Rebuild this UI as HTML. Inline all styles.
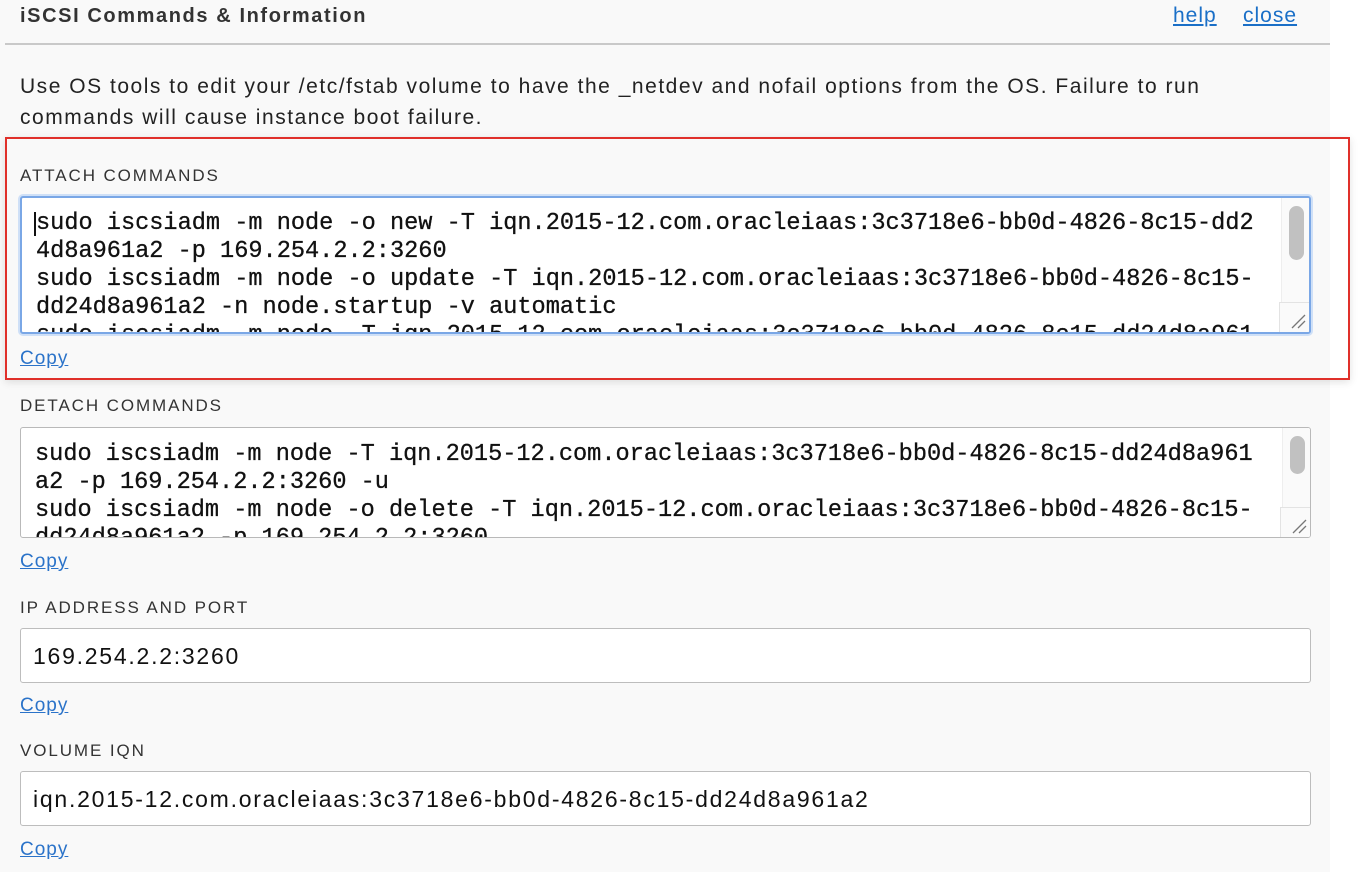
<!DOCTYPE html>
<html><head><meta charset="utf-8"><style>
*{margin:0;padding:0;box-sizing:border-box}
body{width:1362px;height:872px;background:#fff;position:relative;overflow:hidden;font-family:"Liberation Sans",sans-serif;color:#1f1f1f}
.panel{position:absolute;left:0;top:0;width:1330px;height:872px;background:#f9f9f9}
.a{position:absolute;white-space:nowrap}
.title{left:20px;top:5px;font-size:20px;font-weight:bold;color:#333;letter-spacing:1.6px}
.hr{position:absolute;left:5px;top:43px;width:1325px;height:2px;background:#c9c9c9}
.links{top:4px;font-size:21px;color:#1a6fc7;text-decoration:underline;letter-spacing:1px}
.p{left:20px;top:71px;font-size:21px;line-height:31px;color:#222;letter-spacing:1.52px}
.lbl{left:20px;font-size:17px;color:#333;letter-spacing:1.9px}
.copy{left:20px;font-size:19px;color:#2b73c9;text-decoration:underline;letter-spacing:1px}
.ta{position:absolute;left:20px;width:1291px;background:#fff;border:1px solid #b9b9b9;border-radius:3px;overflow:hidden}
.ta pre{position:absolute;left:14px;font-family:"Liberation Mono",monospace;font-size:23.6px;line-height:28px;color:#111;-webkit-text-stroke:.3px #111}
.sb{position:absolute;right:0;top:0;width:28px;bottom:0;background:#fafafa;border-left:1px solid #eee}
.thumb{position:absolute;left:7px;top:8px;width:15px;height:54px;border-radius:8px;background:#c1c1c1}
.grip{position:absolute;right:0;bottom:0;width:30px;height:30px;background:#fafafa;border-left:1px solid #e3e3e3;border-top:1px solid #e3e3e3}
.inp{position:absolute;left:20px;width:1291px;height:55px;background:#fff;border:1px solid #bdbdbd;border-radius:3px;font-size:23px;letter-spacing:1.75px;padding:14px 0 0 12px;color:#111}
.red{position:absolute;left:5px;top:137px;width:1345px;height:243px;border:2px solid #e0302a;box-shadow:0 2px 8px rgba(0,0,0,.12)}
</style></head><body>
<div class="panel"></div>
<div class="a title">iSCSI Commands &amp; Information</div>
<div class="a links" style="left:1173px">help</div>
<div class="a links" style="left:1243px">close</div>
<div class="hr"></div>
<div class="a p">Use OS tools to edit your /etc/fstab volume to have the _netdev and nofail options from the OS. Failure to run<br>commands will cause instance boot failure.</div>
<div class="red"></div>
<div class="a lbl" style="top:166px">ATTACH COMMANDS</div>
<div class="ta" style="top:196px;height:138px;border:2px solid #7aa7e6;box-shadow:0 0 0 2px #cfe0f7">
<pre style="top:12px">sudo iscsiadm -m node -o new -T iqn.2015-12.com.oracleiaas:3c3718e6-bb0d-4826-8c15-dd2
4d8a961a2 -p 169.254.2.2:3260
sudo iscsiadm -m node -o update -T iqn.2015-12.com.oracleiaas:3c3718e6-bb0d-4826-8c15-
dd24d8a961a2 -n node.startup -v automatic
sudo iscsiadm -m node -T iqn.2015-12.com.oracleiaas:3c3718e6-bb0d-4826-8c15-dd24d8a961</pre>
<div style="position:absolute;left:12px;top:14px;width:2px;height:24px;background:#111"></div>
<div class="sb"><div class="thumb"></div></div>
<div class="grip"><svg width="30" height="30"><path d="M12 25L25 12M18 25L25 18" stroke="#777" stroke-width="1.3"/></svg></div>
</div>
<div class="a copy" style="top:348px">Copy</div>
<div class="a lbl" style="top:396px">DETACH COMMANDS</div>
<div class="ta" style="top:427px;height:111px">
<pre style="top:13px">sudo iscsiadm -m node -T iqn.2015-12.com.oracleiaas:3c3718e6-bb0d-4826-8c15-dd24d8a961
a2 -p 169.254.2.2:3260 -u
sudo iscsiadm -m node -o delete -T iqn.2015-12.com.oracleiaas:3c3718e6-bb0d-4826-8c15-
dd24d8a961a2 -p 169.254.2.2:3260</pre>
<div class="sb"><div class="thumb" style="height:38px"></div></div>
<div class="grip"><svg width="30" height="30"><path d="M12 25L25 12M18 25L25 18" stroke="#777" stroke-width="1.3"/></svg></div>
</div>
<div class="a copy" style="top:551px">Copy</div>
<div class="a lbl" style="top:598px">IP ADDRESS AND PORT</div>
<div class="inp" style="top:628px">169.254.2.2:3260</div>
<div class="a copy" style="top:695px">Copy</div>
<div class="a lbl" style="top:741px">VOLUME IQN</div>
<div class="inp" style="top:771px">iqn.2015-12.com.oracleiaas:3c3718e6-bb0d-4826-8c15-dd24d8a961a2</div>
<div class="a copy" style="top:839px">Copy</div>
</body></html>
